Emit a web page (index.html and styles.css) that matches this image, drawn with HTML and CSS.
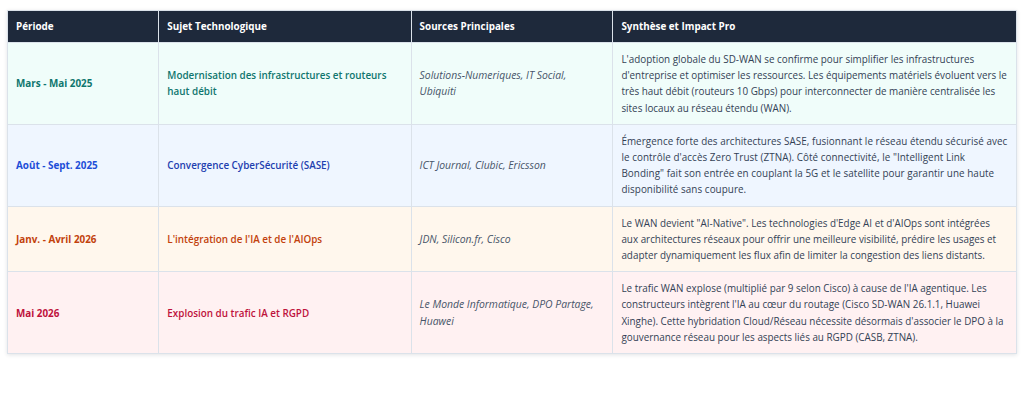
FILE: index.html
```html
<!DOCTYPE html>
<html lang="fr">
<head>
<meta charset="utf-8">
<title>Veille WAN</title>
<link rel="stylesheet" href="styles.css">
</head>
<body>
<div class="wrap">
<table class="veille">
  <colgroup>
    <col class="c-periode">
    <col class="c-sujet">
    <col class="c-sources">
    <col class="c-synthese">
  </colgroup>
  <thead>
    <tr>
      <th>Période</th>
      <th>Sujet Technologique</th>
      <th>Sources Principales</th>
      <th>Synthèse et Impact Pro</th>
    </tr>
  </thead>
  <tbody>
    <tr class="r-teal">
      <td class="periode">Mars - Mai 2025</td>
      <td class="sujet">Modernisation des infrastructures et routeurs haut débit</td>
      <td class="sources">Solutions-Numeriques, IT Social, Ubiquiti</td>
      <td class="synthese">L'adoption globale du SD-WAN se confirme pour simplifier les infrastructures d'entreprise et optimiser les ressources. Les équipements matériels évoluent vers le très haut débit (routeurs 10 Gbps) pour interconnecter de manière centralisée les sites locaux au réseau étendu (WAN).</td>
    </tr>
    <tr class="r-blue">
      <td class="periode">Août - Sept. 2025</td>
      <td class="sujet">Convergence CyberSécurité (SASE)</td>
      <td class="sources">ICT Journal, Clubic, Ericsson</td>
      <td class="synthese">Émergence forte des architectures SASE, fusionnant le réseau étendu sécurisé avec le contrôle d'accès Zero Trust (ZTNA). Côté connectivité, le "Intelligent Link Bonding" fait son entrée en couplant la 5G et le satellite pour garantir une haute disponibilité sans coupure.</td>
    </tr>
    <tr class="r-orange">
      <td class="periode">Janv. - Avril 2026</td>
      <td class="sujet">L'intégration de l'IA et de l'AIOps</td>
      <td class="sources">JDN, Silicon.fr, Cisco</td>
      <td class="synthese">Le WAN devient "AI-Native". Les technologies d'Edge AI et d'AIOps sont intégrées aux architectures réseaux pour offrir une meilleure visibilité, prédire les usages et adapter dynamiquement les flux afin de limiter la congestion des liens distants.</td>
    </tr>
    <tr class="r-rose">
      <td class="periode">Mai 2026</td>
      <td class="sujet">Explosion du trafic IA et RGPD</td>
      <td class="sources">Le Monde Informatique, DPO Partage, Huawei</td>
      <td class="synthese">Le trafic WAN explose (multiplié par 9 selon Cisco) à cause de l'IA agentique. Les constructeurs intègrent l'IA au cœur du routage (Cisco SD-WAN 26.1.1, Huawei Xinghe). Cette hybridation Cloud/Réseau nécessite désormais d'associer le DPO à la gouvernance réseau pour les aspects liés au RGPD (CASB, ZTNA).</td>
    </tr>
  </tbody>
</table>
</div>
</body>
</html>
```

FILE: styles.css
```css
html, body {
  margin: 0;
  padding: 0;
  background: #ffffff;
}

.wrap {
  padding: 10px 7px;
}

.veille {
  width: 100%;
  border-collapse: collapse;
  table-layout: fixed;
  font-family: "Open Sans", "Noto Sans", sans-serif;
  font-size: 9.87px;
  line-height: 16.2px;
  color: #334155;
  box-shadow: 0 1px 4px rgba(15, 23, 42, 0.12);
}

.c-periode { width: 15%; }
.c-sujet { width: 25%; }
.c-sources { width: 20%; }
.c-synthese { width: 40%; }

.veille th,
.veille td {
  border: 1px solid #dbe2ea;
  padding: 8px 8px;
  text-align: left;
  vertical-align: middle;
}

.veille th {
  background: #1e293b;
  color: #ffffff;
  font-weight: 700;
  line-height: 15px;
}

.periode { font-weight: 700; }
.sujet { font-weight: 600; }
.sources { font-style: italic; color: #475569; font-size: 10.4px; }
.synthese { color: #334155; }

.r-teal { background: #f0fdfa; }
.r-teal .periode, .r-teal .sujet { color: #0f766e; }

.r-blue { background: #eff6ff; }
.r-blue .periode { color: #1d4ed8; }
.r-blue .sujet { color: #1e40af; }
.r-blue .synthese { letter-spacing: 0.06px; }

.r-orange { background: #fff7ed; }
.r-orange .periode, .r-orange .sujet { color: #c2410c; }

.r-rose { background: #fff1f2; }
.r-rose .periode, .r-rose .sujet { color: #be123c; }
```
